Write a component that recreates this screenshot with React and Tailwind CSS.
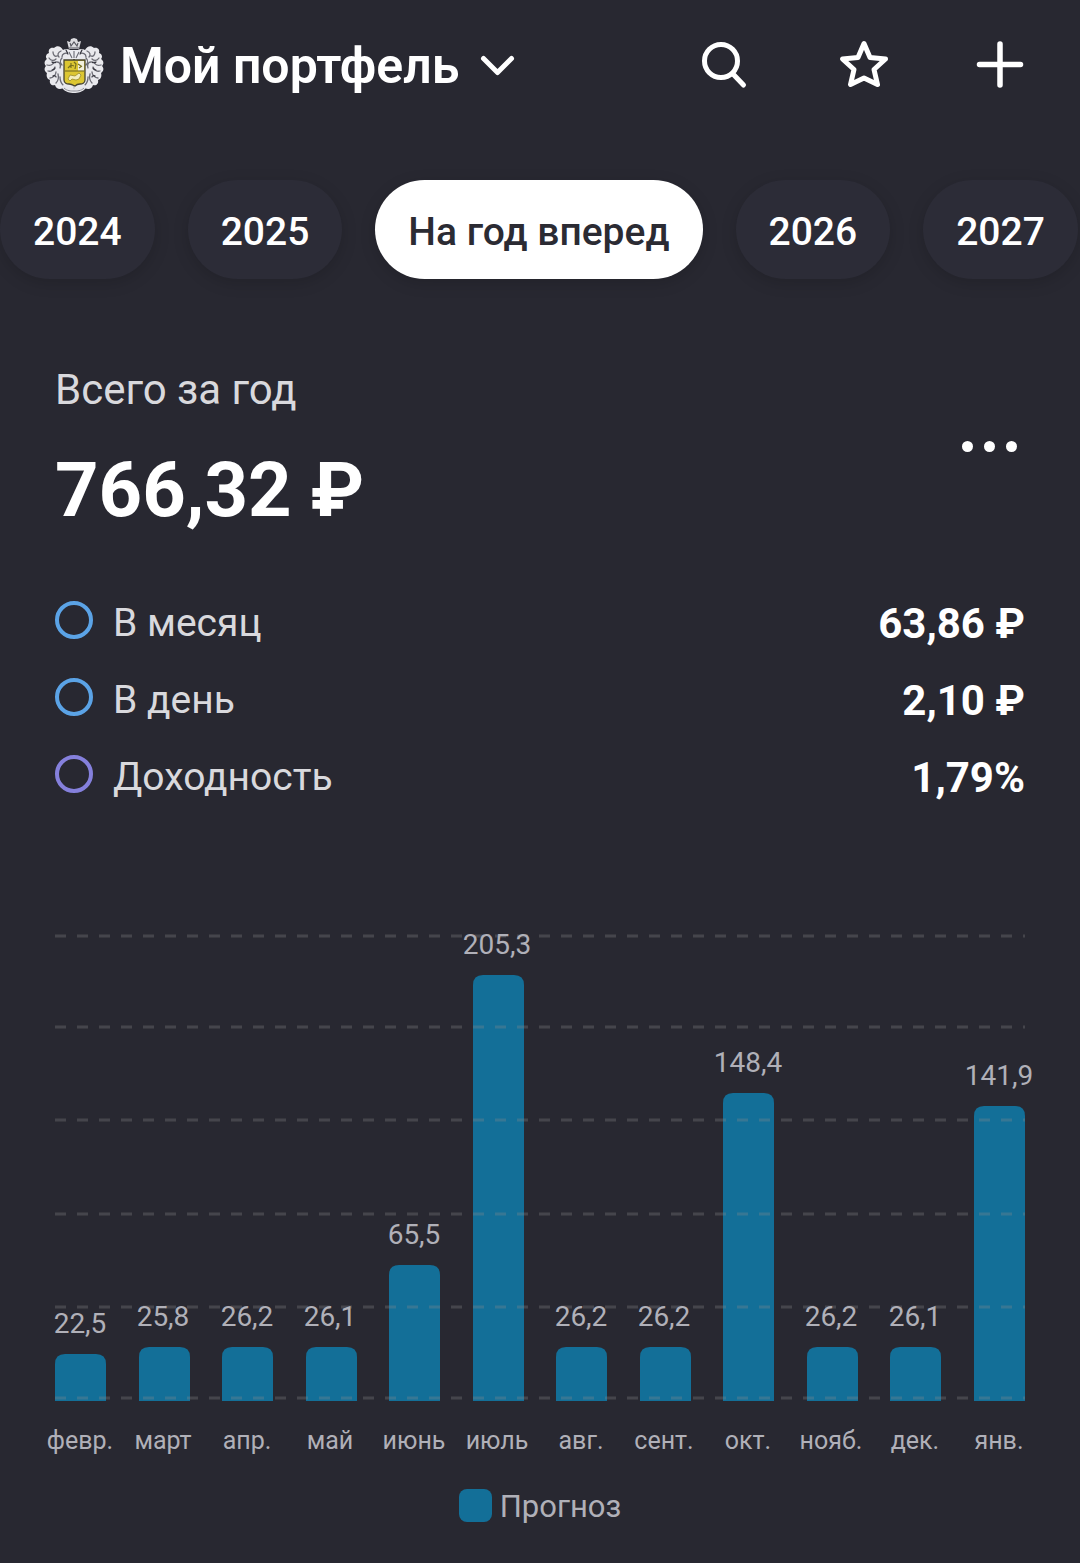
import { useState } from "react";

const periods = ["2024", "2025", "На год вперед", "2026", "2027"];

const stats = [
  { label: "В месяц", value: "63,86 ₽", ring: "border-[#5ba3e6]" },
  { label: "В день", value: "2,10 ₽", ring: "border-[#5ba3e6]" },
  { label: "Доходность", value: "1,79%", ring: "border-[#8580dc]" },
];

const months = [
  { name: "февр.", value: 22.5 },
  { name: "март", value: 25.8 },
  { name: "апр.", value: 26.2 },
  { name: "май", value: 26.1 },
  { name: "июнь", value: 65.5 },
  { name: "июль", value: 205.3 },
  { name: "авг.", value: 26.2 },
  { name: "сент.", value: 26.2 },
  { name: "окт.", value: 148.4 },
  { name: "нояб.", value: 26.2 },
  { name: "дек.", value: 26.1 },
  { name: "янв.", value: 141.9 },
];

// Chart geometry, in viewBox units
const CHART = { left: 55, right: 1025, base: 491, barWidth: 51 };
const GRID_LINES = [26, 117, 210, 304, 397, 488];
const UNITS_PER_RUBLE = 2.076;

const formatValue = (value) => value.toFixed(1).replace(".", ",");

const Crest = () => (
  <svg viewBox="0 0 60 56" className="h-14 w-15 shrink-0" aria-hidden="true">
    {/* mantling, one half mirrored */}
    {["", "translate(60 0) scale(-1 1)"].map((transform) => (
      <g key={transform} transform={transform}>
        <path
          d="M29 14c-3-3-7-4-10-2-2-4-6-5-9-2-4-1-6 2-5 5-3 1-4 4-2 6-3 2-3 5-1 7-2 2-2 5 1 7-1 3 0 6 3 7-1 4 2 6 5 5 1 4 5 5 8 3 2 3 5 4 8 3l3 2z"
          fill="#e9e9ed"
        />
        <path
          d="M25 16c-4-2-7 0-7 3M17 13c-3 1-4 4-2 6M9 14c0 3 2 5 4 4M5 20c2 3 5 3 7 1M3 27c3 1 6 0 7-3M4 33c3 1 6-1 7-4M6 40c3 0 6-3 6-6M12 45c2-2 3-5 2-9M19 47c-2-2-3-5-3-8M13 24c3 0 4 3 3 6M18 20c-2 2-2 5 0 7"
          fill="none"
          stroke="#6a6a73"
          strokeWidth="1.3"
          strokeLinecap="round"
        />
        <path
          d="M8 24c1 1 3 1 4 0M8 32c1 0 3-1 3-2M9 38c1-1 3 0 3 1M22 12l2 4"
          fill="none"
          stroke="#33333c"
          strokeWidth="1.2"
          strokeLinecap="round"
        />
      </g>
    ))}
    {/* crown */}
    <path d="M23 3l3 1 1-3 3-1 3 1 1 3 3-1-2 8H25z" fill="#dcdce0" />
    <path
      d="M26 5l1 3 3-4 3 4 1-3M25 10h10"
      fill="none"
      stroke="#55555e"
      strokeWidth="1.1"
    />
    <path d="M24 12h12l-1 9H25z" fill="#ececf0" />
    <path
      d="M25 14l3 6M35 14l-3 6M30 13v7"
      fill="none"
      stroke="#6a6a73"
      strokeWidth="1.1"
    />
    {/* shield */}
    <path
      d="M20 22h21v20c0 3-3 4-5 4s-4 1-5 2c-2-1-4-2-6-2s-5-1-5-4z"
      fill="#dcc632"
      stroke="#47442f"
      strokeWidth="1.3"
    />
    <path d="M34 23h6v10h-6z" fill="#f2f0dc" />
    <path d="M21 33h19" stroke="#7d7324" strokeWidth="1.2" />
    <path
      d="M24 30l3-3 3 1M27 25v5M30 24l2 2-1 5M34 26l3 2M35 30l3-2"
      fill="none"
      stroke="#77701f"
      strokeWidth="1.2"
    />
    <path
      d="M24 41l2-4 5 1 4-3 2 2-2 4-3 1-4-1-2 2z"
      fill="#f3edbd"
      stroke="#8e8122"
      strokeWidth="0.7"
    />
    {/* ribbon */}
    <path
      d="M19 47c4 3 8 2 11 4 3-2 7-1 11-4l1 3c-3 4-8 5-12 5s-9-1-12-5z"
      fill="#e6e6ea"
    />
    <path
      d="M20 50c3 3 7 3 10 3s7 0 10-3"
      fill="none"
      stroke="#8c8c94"
      strokeWidth="1"
    />
  </svg>
);

const Header = () => (
  <header className="flex items-start justify-between pt-8 pr-12 pl-11">
    <button type="button" className="flex items-center">
      <Crest />
      <span className="ml-4 text-[50px] leading-17 font-semibold">
        Мой портфель
      </span>
      <svg
        viewBox="0 0 36 24"
        className="ml-5 h-6 w-9"
        fill="none"
        stroke="currentColor"
        strokeWidth="5"
        strokeLinecap="round"
        strokeLinejoin="round"
        aria-hidden="true"
      >
        <path d="M4.5 4.5l14 14 14-14" />
      </svg>
    </button>
    <div className="flex gap-[73px]">
      <button type="button" aria-label="Поиск">
        <svg
          viewBox="0 0 64 64"
          className="size-16"
          fill="none"
          stroke="currentColor"
          strokeWidth="5"
          strokeLinecap="round"
          aria-hidden="true"
        >
          <circle cx="27" cy="29" r="16.5" />
          <path d="M39 42l10.500 11" />
        </svg>
      </button>
      <button type="button" aria-label="Избранное">
        <svg
          viewBox="0 0 64 64"
          className="size-16"
          fill="none"
          stroke="currentColor"
          strokeWidth="5"
          strokeLinejoin="round"
          aria-hidden="true"
        >
          <path d="M33 11.500l6 14 15.500 1.500-11.500 10.500 3.500 15L33 46l-13.500 6.500 3.500-15-11.500-10.500 15.500-1.500z" />
        </svg>
      </button>
      <button type="button" aria-label="Добавить">
        <svg
          viewBox="0 0 64 64"
          className="size-16"
          fill="none"
          stroke="currentColor"
          strokeWidth="5.500"
          strokeLinecap="round"
          aria-hidden="true"
        >
          <path d="M32 12v41M11.500 32.500h41" />
        </svg>
      </button>
    </div>
  </header>
);

const IncomeChart = () => {
  const step =
    (CHART.right - CHART.left - CHART.barWidth) / (months.length - 1);

  return (
    <svg
      viewBox="0 0 1080 560"
      className="mt-[94px] block w-full"
      role="img"
      aria-label="Прогноз выплат по месяцам"
    >
      {months.map((month, idx) => {
        const x = Math.round(CHART.left + idx * step);
        const height = Math.round(month.value * UNITS_PER_RUBLE);
        const top = CHART.base - height;
        return (
          <path
            key={month.name}
            d={`M${x} ${CHART.base}V${top + 10}q0-10 10-10h${CHART.barWidth - 20}q10 0 10 10V${CHART.base}z`}
            fill="#136f98"
          />
        );
      })}
      {GRID_LINES.map((y) => (
        <line
          key={y}
          x1={CHART.left}
          x2={CHART.right}
          y1={y}
          y2={y}
          stroke="#8c8c8c"
          strokeOpacity="0.3"
          strokeWidth="3"
          strokeDasharray="11 11"
        />
      ))}
      {months.map((month, idx) => {
        const center = Math.floor(CHART.left + idx * step + 25);
        const top = CHART.base - Math.round(month.value * UNITS_PER_RUBLE);
        return (
          <g key={month.name} fill="#b0b0b8" textAnchor="middle">
            <text x={center} y={top - 21} className="text-[28px]">
              {formatValue(month.value)}
            </text>
            <text x={center} y={539} className="text-[25px]">
              {month.name}
            </text>
          </g>
        );
      })}
    </svg>
  );
};

export default function App() {
  const [activePeriod, setActivePeriod] = useState("На год вперед");

  return (
    <div className="min-h-screen bg-[#282831] font-[Roboto,sans-serif] text-white">
      <Header />

      {/* Period switcher */}
      <nav className="mt-8 flex gap-[33px] overflow-hidden py-12">
        {periods.map((period) => (
          <button
            key={period}
            type="button"
            onClick={() => setActivePeriod(period)}
            className={`h-[99px] shrink-0 rounded-full px-[33px] pt-1.5 text-[39px] font-medium whitespace-nowrap shadow-[0_4px_16px_rgba(0,0,0,0.15)] ${
              activePeriod === period
                ? "bg-white text-[#2b2b33]"
                : "bg-[#2c2c37]"
            }`}
          >
            {period}
          </button>
        ))}
      </nav>

      <main>
        <section className="px-[55px] pt-[37px]">
          <div className="flex items-center justify-between">
            <div>
              <h2 className="text-[42px] leading-13 text-[#d9d9dd]">
                Всего за год
              </h2>
              <p className="mt-[26px] text-[76px] leading-24 font-bold">
                766,32 ₽
              </p>
            </div>
            <button
              type="button"
              aria-label="Ещё"
              className="mr-2 mb-2.5 flex gap-[11px]"
            >
              <span className="size-[11px] rounded-full bg-white" />
              <span className="size-[11px] rounded-full bg-white" />
              <span className="size-[11px] rounded-full bg-white" />
            </button>
          </div>

          <dl className="mt-[47px]">
            {stats.map((stat) => (
              <div
                key={stat.label}
                className="flex h-[77px] items-center justify-between"
              >
                <dt className="flex items-center gap-5 text-[39px] text-[#d9d9dd]">
                  <span
                    className={`mb-2 size-[38px] rounded-full border-4 ${stat.ring}`}
                  />
                  {stat.label}
                </dt>
                <dd className="text-[42px] font-bold">{stat.value}</dd>
              </div>
            ))}
          </dl>
        </section>

        <IncomeChart />

        <div className="flex items-center justify-center gap-2 pt-3.5 pb-6 text-[31px] text-[#b0b0b8]">
          <span className="mb-1 size-[33px] rounded-lg bg-[#136f98]" />
          Прогноз
        </div>
      </main>
    </div>
  );
}
